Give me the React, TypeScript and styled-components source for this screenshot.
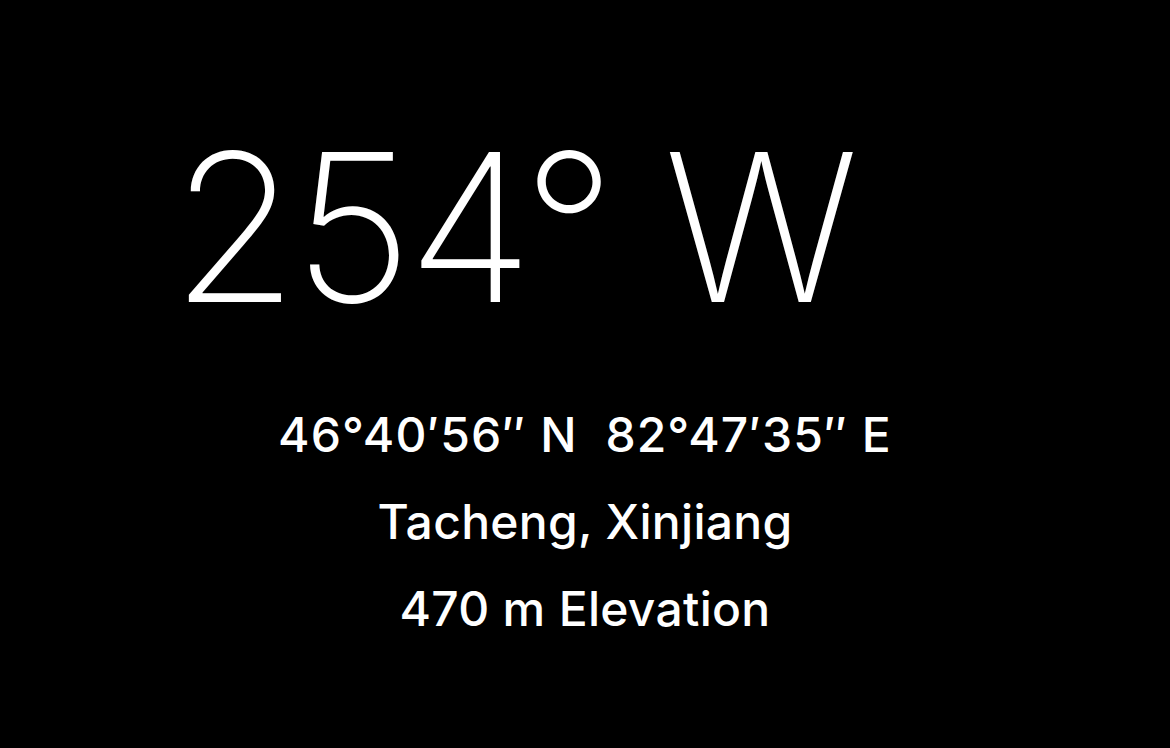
import styled, { createGlobalStyle } from "styled-components";

const GlobalStyle = createGlobalStyle`
  html, body {
    margin: 0;
    padding: 0;
    background: #000;
  }
`;

const Screen = styled.div`
  width: 1170px;
  height: 748px;
  background: #000;
  color: #fff;
  font-family: Inter, "Noto Sans", sans-serif;
  display: flex;
  flex-direction: column;
  overflow: hidden;
`;

const Heading = styled.div`
  padding: 124px 0 0 171px;
  font-size: 206px;
  font-weight: 200;
  line-height: 206px;
  letter-spacing: -5px;
  white-space: nowrap;
`;

const Details = styled.div`
  margin-top: 80px;
  display: flex;
  flex-direction: column;
  align-items: center;
  gap: 37px;
`;

const Line = styled.div<{ $tracking?: number }>`
  font-size: 48px;
  font-weight: 500;
  line-height: 50px;
  letter-spacing: ${(p) => p.$tracking ?? 0.3}px;
  white-space: nowrap;
`;

export default function App() {
  return (
    <>
      <GlobalStyle />
      <Screen>
        <Heading>254° W</Heading>
        <Details>
          <Line $tracking={1.1}>46°40′56″ N&nbsp;&nbsp;82°47′35″ E</Line>
          <Line>Tacheng, Xinjiang</Line>
          <Line>470 m Elevation</Line>
        </Details>
      </Screen>
    </>
  );
}
